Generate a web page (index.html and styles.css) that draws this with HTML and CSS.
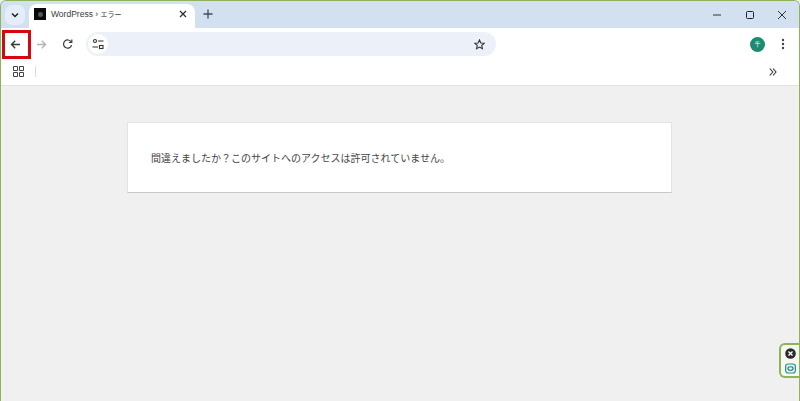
FILE: index.html
```html
<!DOCTYPE html>
<html lang="ja">
<head>
    <meta charset="UTF-8">
    <title>WordPress › エラー</title>
    <link rel="stylesheet" href="styles.css">
</head>
<body>
    <div class="window">
        <div class="tabbar">
            <div class="tab-search">
                <svg width="10" height="10" viewBox="0 0 10 10"><path d="M2 3.500l3 3 3-3" fill="none" stroke="#1f1f1f" stroke-width="1.500"/></svg>
            </div>
            <div class="tab">
                <div class="favicon"><span class="favicon-dot"></span></div>
                <span class="tab-title">WordPress › <span class="tab-title-ja">エラー</span></span>
                <svg class="tab-close" width="8" height="8" viewBox="0 0 8 8"><path d="M1 1l6 6M7 1L1 7" fill="none" stroke="#2a2a2a" stroke-width="1.200"/></svg>
            </div>
            <svg class="new-tab" width="10" height="10" viewBox="0 0 10 10"><path d="M5 .500v9M.5 5h9" fill="none" stroke="#3c4a5c" stroke-width="1.300"/></svg>
            <div class="window-controls">
                <svg width="10" height="10" viewBox="0 0 10 10"><path d="M1 5h8" stroke="#333" stroke-width="1"/></svg>
                <svg width="10" height="10" viewBox="0 0 10 10"><rect x="1.500" y="1.500" width="7" height="7" rx="1" fill="none" stroke="#222" stroke-width="1"/></svg>
                <svg width="10" height="10" viewBox="0 0 10 10"><path d="M1 1l8 8M9 1l-8 8" stroke="#333" stroke-width="1"/></svg>
            </div>
        </div>

        <div class="toolbar">
            <div class="nav-btn">
                <svg width="11" height="11" viewBox="0 0 11 11"><path d="M10 5.500H1.500M5.200 1.800L1.500 5.500 5.200 9.200" fill="none" stroke="#3a3a3a" stroke-width="1.400"/></svg>
            </div>
            <div class="nav-btn">
                <svg width="11" height="11" viewBox="0 0 11 11"><path d="M1 5.500h8.500M5.800 1.800l3.700 3.700-3.700 3.700" fill="none" stroke="#b4b4b4" stroke-width="1.400"/></svg>
            </div>
            <div class="nav-btn">
                <svg width="11" height="11" viewBox="0 0 11 11"><path d="M9.200 3A4.100 4.100 0 1 0 9.600 6.200" fill="none" stroke="#3a3a3a" stroke-width="1.200"/><path d="M9.800 .6v2.900H6.900" fill="none" stroke="#3a3a3a" stroke-width="1.200"/></svg>
            </div>
            <div class="omnibox">
                <div class="site-info">
                    <svg width="12" height="12" viewBox="0 0 12 12"><circle cx="3" cy="3" r="1.500" fill="none" stroke="#333" stroke-width="1.100"/><path d="M6 3h5.500M0.500 9H6" stroke="#333" stroke-width="1.100"/><rect x="7.500" y="7.500" width="3.500" height="3" fill="none" stroke="#333" stroke-width="1.100"/></svg>
                </div>
                <svg class="star" width="11" height="11" viewBox="0 0 12 12"><path d="M6 1l1.500 3.300 3.600.400-2.700 2.400.800 3.500L6 8.800l-3.200 1.800.800-3.500L.900 4.700l3.600-.400z" fill="none" stroke="#333" stroke-width="1.200"/></svg>
            </div>
            <div class="toolbar-right">
                <div class="avatar">千</div>
                <svg width="4" height="12" viewBox="0 0 4 12"><circle cx="2" cy="2" r="1.200" fill="#444"/><circle cx="2" cy="6" r="1.200" fill="#444"/><circle cx="2" cy="10" r="1.200" fill="#444"/></svg>
            </div>
        </div>

        <div class="bookmarks">
            <svg width="11" height="11" viewBox="0 0 11 11"><path d="M.5.500h4v4h-4zM6.500.500h4v4h-4zM.5 6.500h4v4h-4zM6.500 6.500h4v4h-4z" fill="none" stroke="#444" stroke-width="1"/></svg>
            <span class="bookmarks-sep"></span>
            <svg class="more" width="8" height="8" viewBox="0 0 8 8"><path d="M.8.500L3.800 4 .8 7.500M4 .500L7 4 4 7.500" fill="none" stroke="#333" stroke-width="1.100"/></svg>
        </div>

        <div class="content">
            <div class="message">間違えましたか？このサイトへのアクセスは許可されていません。</div>
        </div>
    </div>

    <div class="highlight"></div>

    <div class="side-widget">
        <svg width="11" height="11" viewBox="0 0 11 11"><circle cx="5.500" cy="5.500" r="5.300" fill="#2b2b2b"/><path d="M3.500 3.500l4 4M7.500 3.500l-4 4" stroke="#fff" stroke-width="1.400"/></svg>
        <svg width="11" height="11" viewBox="0 0 11 11"><rect x=".6" y="1" width="9.800" height="9" rx="2.500" fill="#e2f3f2" stroke="#2a8f92" stroke-width="1.200"/><ellipse cx="5.500" cy="5.500" rx="2.600" ry="1.800" fill="#e2f3f2" stroke="#2a6f78" stroke-width="1.100"/></svg>
    </div>
</body>
</html>
```

FILE: styles.css
```css
* {
    box-sizing: border-box;
}
html, body {
    margin: 0;
    height: 100%;
    overflow: hidden;
}
body {
    font-family: "Liberation Sans", "Noto Sans CJK JP", sans-serif;
    background-color: #f0f0f0;
}
.window {
    height: 401px;
    display: flex;
    flex-direction: column;
    border: 1px solid #8fb35a;
    border-bottom: 0;
    border-radius: 6px 6px 0 0;
    overflow: hidden;
}
.tabbar {
    height: 27px;
    flex: none;
    display: flex;
    align-items: flex-end;
    padding-left: 4px;
    background-color: #d3e0f0;
}
.tab-search {
    width: 20px;
    height: 20px;
    margin-bottom: 3px;
    display: flex;
    align-items: center;
    justify-content: center;
    background-color: #e4edf8;
    border-radius: 7px;
}
.tab {
    width: 166px;
    height: 24px;
    margin-left: 4px;
    padding: 0 8px 4px 5px;
    display: flex;
    align-items: center;
    background-color: #fff;
    border-radius: 8px 8px 0 0;
}
.favicon {
    width: 12px;
    height: 12px;
    margin-right: 5px;
    display: flex;
    align-items: center;
    justify-content: center;
    background-color: #0a0a0a;
}
.favicon-dot {
    width: 5px;
    height: 5px;
    border-radius: 50%;
    background-color: #555;
}
.tab-title {
    flex: 1;
    font-size: 8.500px;
    color: #3a3a3a;
    white-space: nowrap;
}
.tab-title-ja {
    font-size: 7px;
}
.new-tab {
    margin: 0 0 9px 8px;
}
.window-controls {
    margin-left: auto;
    margin-bottom: 8px;
    padding-right: 12px;
    display: flex;
    gap: 22.500px;
}
.toolbar {
    height: 32px;
    flex: none;
    display: flex;
    align-items: center;
    padding-left: 1px;
    background-color: #fff;
}
.nav-btn {
    width: 26px;
    height: 26px;
    display: flex;
    align-items: center;
    justify-content: center;
}
.omnibox {
    width: 410px;
    height: 24px;
    margin-left: 6px;
    padding: 0 11px 0 2px;
    display: flex;
    align-items: center;
    justify-content: space-between;
    background-color: #ebf0f9;
    border-radius: 12px;
}
.site-info {
    width: 20px;
    height: 20px;
    display: flex;
    align-items: center;
    justify-content: center;
    background-color: #fff;
    border-radius: 50%;
}
.toolbar-right {
    margin-left: auto;
    padding-right: 14px;
    display: flex;
    align-items: center;
    gap: 16px;
}
.avatar {
    width: 15px;
    height: 15px;
    margin-top: 1px;
    border-radius: 50%;
    background-color: #1d8a74;
    color: #fff;
    font-size: 6px;
    line-height: 15px;
    text-align: center;
}
.bookmarks {
    height: 26px;
    flex: none;
    display: flex;
    align-items: center;
    padding: 0 22px 2px 12px;
    background-color: #fff;
    border-bottom: 1px solid #e3e3e3;
}
.bookmarks-sep {
    width: 1px;
    height: 11px;
    margin-left: 11px;
    background-color: #d5dbe3;
}
.more {
    margin-left: auto;
}
.content {
    flex: 1;
    padding: 36px 0 0 126px;
    background-color: #f0f0f0;
}
.message {
    width: 545px;
    height: 71px;
    padding: 28px 0 0 23px;
    font-size: 10px;
    line-height: 16px;
    color: #444;
    background-color: #fff;
    border: 1px solid #e4e4e4;
    border-bottom-color: #c8c8c8;
}
.highlight {
    position: absolute;
    left: 2px;
    top: 30px;
    width: 29px;
    height: 29px;
    border: 3px solid #d8060f;
}
.side-widget {
    position: absolute;
    right: 1px;
    top: 343px;
    width: 20px;
    height: 35px;
    display: flex;
    flex-direction: column;
    align-items: center;
    justify-content: center;
    gap: 4px;
    background-color: #f6f8f0;
    border: 2px solid #8fb35a;
    border-right: 0;
    border-radius: 6px 0 0 6px;
}
```
